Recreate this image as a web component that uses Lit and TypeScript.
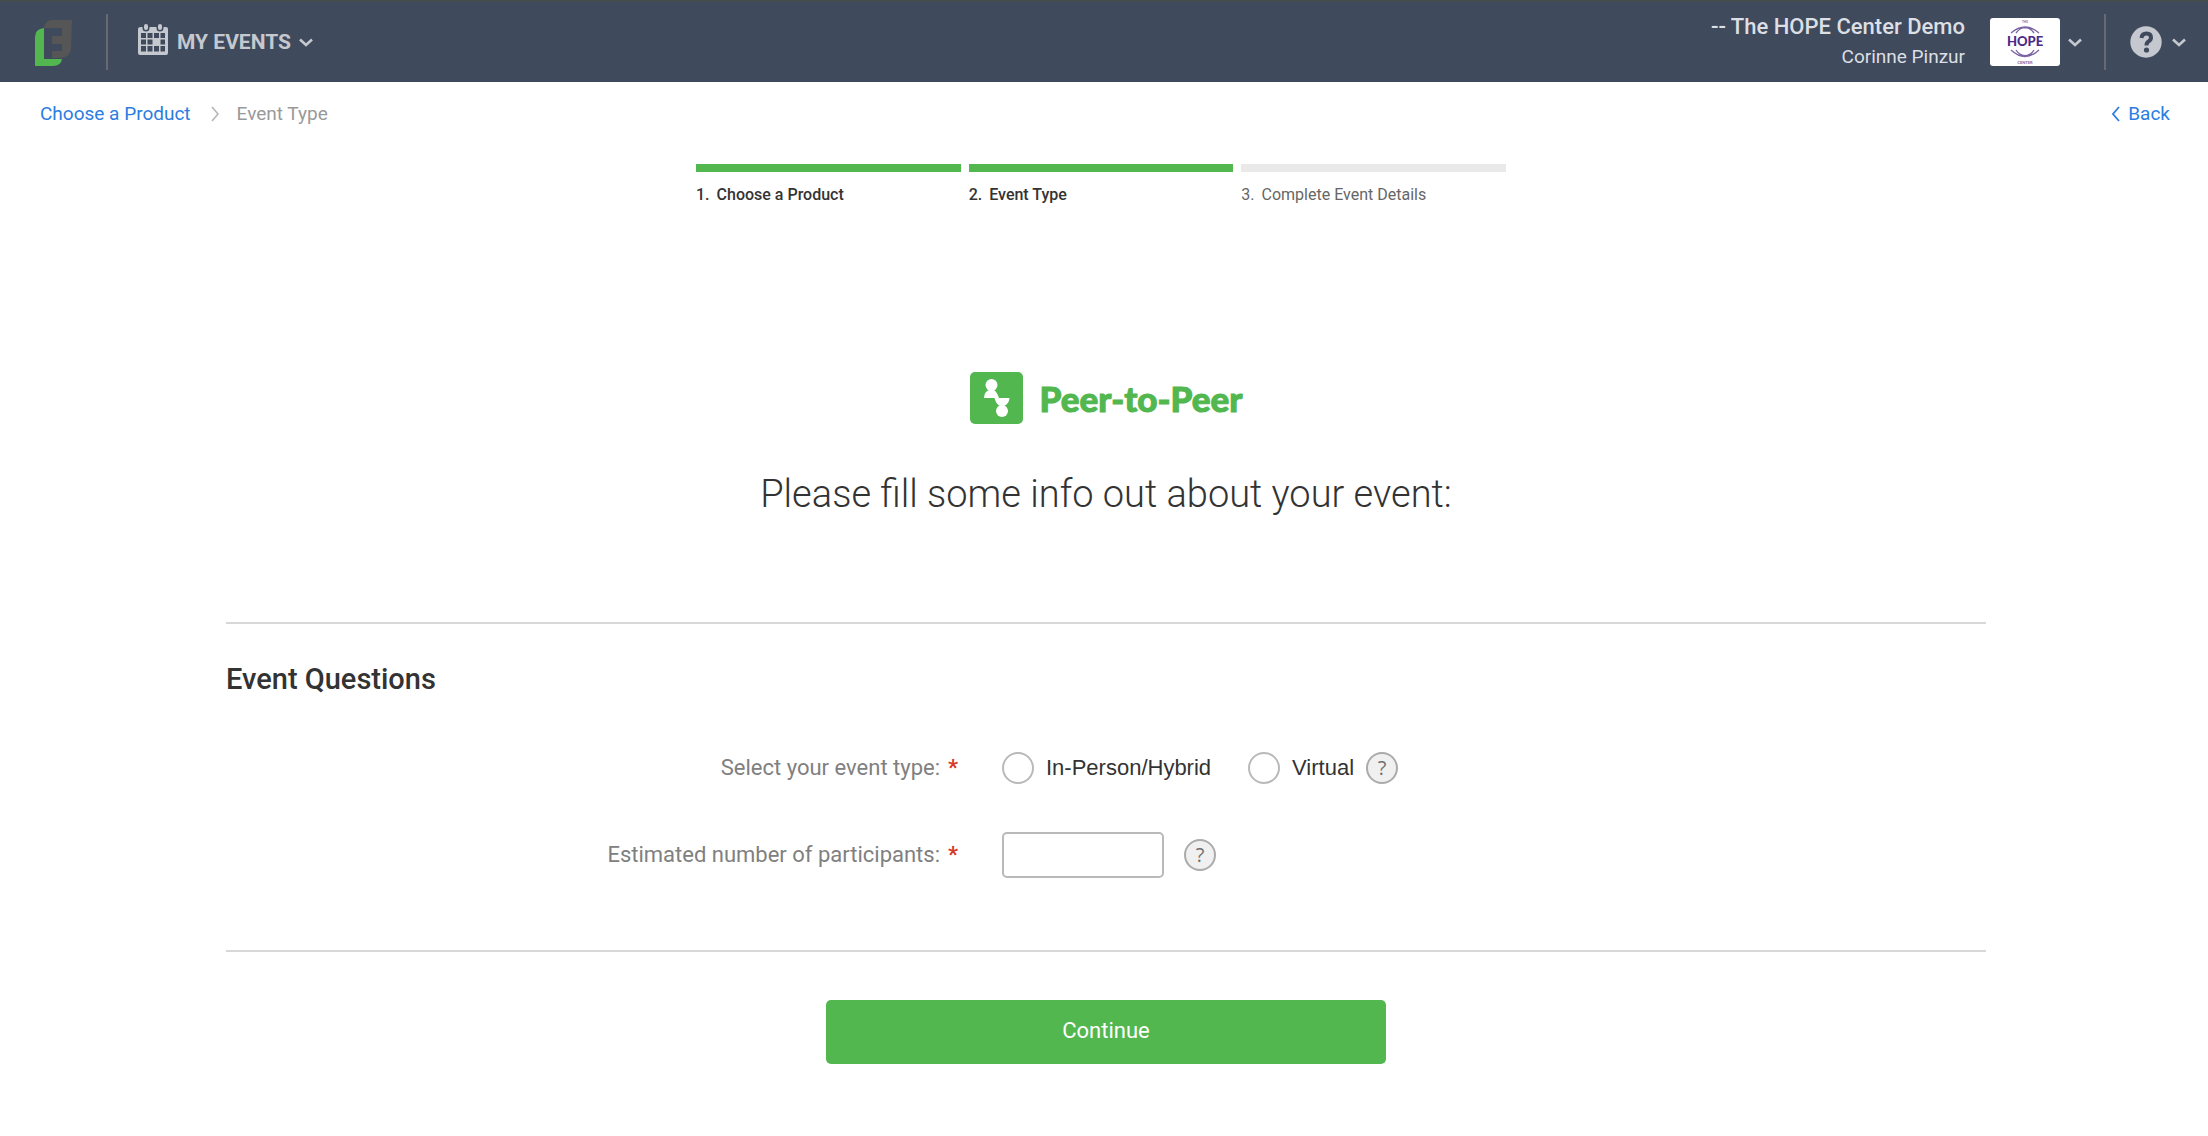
import { LitElement, html, css, svg } from "lit";
import { customElement, state } from "lit/decorators.js";

const chevronDown = svg`<path d="M1 1.5 7 7l6-5.500" fill="none" stroke="currentColor" stroke-width="2.600" />`;

@customElement("app-root")
export class AppRoot extends LitElement {
  static styles = css`
    :host {
      display: block;
      font-family: Roboto, "Liberation Sans", sans-serif;
      font-size: 22px;
      line-height: 30px;
      color: #333;
    }
    * { box-sizing: border-box; }
    svg { display: block; flex: none; }
    a { text-decoration: none; color: inherit; }
    button { font: inherit; border: 0; padding: 0; background: none; color: inherit; cursor: pointer; }
    h1, h2, ol { margin: 0; padding: 0; font-weight: inherit; list-style: none; }

    .bar {
      display: flex;
      align-items: center;
      height: 82px;
      padding: 0 22px 0 34px;
      background: #3f4a5c;
      border-top: 2px solid #454c4d;
      color: #c5c8ce;
    }
    .rule { width: 2px; height: 56px; background: #666a70; }
    .bar .rule.first { margin: 0 30px 0 34px; }
    .bar .rule.last { margin: 0 24px 0 22px; }
    .menu { display: flex; align-items: center; gap: 8px; }
    .menu.events { font-size: 21px; font-weight: 700; }
    .menu.events svg:first-child { margin-bottom: 4px; }
    .menu.help { gap: 10px; }
    .who { margin-left: auto; margin-right: 25px; text-align: right; color: #dcdfe4; }
    .org { font-size: 22px; font-weight: 500; }
    .person { font-size: 19px; }

    .trail {
      display: flex;
      align-items: center;
      padding: 16px 38px 0 40px;
      font-size: 19px;
      line-height: 32px;
      color: #999;
    }
    .trail a { color: #2b7de1; }
    .trail svg { margin: 0 18px 0 20px; }
    .trail .back { display: flex; align-items: center; gap: 8px; margin-left: auto; }
    .trail .back svg { margin: 0; }

    .steps {
      display: grid;
      grid-template-columns: repeat(3, 1fr);
      gap: 8px;
      width: 816px;
      max-width: 100%;
      margin: 34px auto 0;
      padding-right: 6px;
      font-size: 16px;
      line-height: 20px;
      color: #666;
    }
    .step { border-top: 8px solid #e9e9e9; padding-top: 13px; display: flex; gap: 7px; }
    .step.done { border-color: #52b74f; color: #333; font-weight: 500; }

    .intro { display: flex; flex-direction: column; align-items: center; padding: 167px 24px 0 28px; }
    .product {
      display: flex;
      align-items: center;
      gap: 16px;
      color: #52b74f;
      font: 900 35px/52px Lato, sans-serif;
      -webkit-text-stroke: 1px currentColor;
    }
    .intro h1 { margin-top: 44px; font-size: 38px; line-height: 52px; font-weight: 300; text-align: center; }

    .page { max-width: 1812px; margin: 102px auto 0; padding: 0 24px 0 28px; }
    .questions { border: 2px solid #d8d8d8; border-width: 2px 0; padding: 36px 0 72px; }
    .questions h2 { font-size: 29px; line-height: 38px; font-weight: 500; }
    .row {
      display: grid;
      grid-template-columns: 732px 1fr;
      column-gap: 44px;
      align-items: center;
      min-height: 46px;
    }
    .row.kind { margin-top: 47px; }
    .row.count { margin-top: 41px; }
    .label { display: block; text-align: right; color: #808080; }
    .star { margin-left: 8px; color: #d63a2c; font-weight: 700; }
    .answers { display: flex; align-items: center; }
    .choice { display: flex; align-items: center; gap: 12px; font-family: "Liberation Sans", sans-serif; }
    .choice + .choice { margin-left: 37px; }
    .choice input {
      appearance: none;
      width: 32px;
      height: 32px;
      margin: 0;
      border: 2px solid #b9b9b9;
      border-radius: 50%;
      background: #fff;
    }
    .choice input:checked { border-width: 10px; border-color: #52b74f; }
    .number {
      width: 162px;
      height: 46px;
      padding: 0 12px;
      border: 2px solid #b9b9b9;
      border-radius: 5px;
      font: inherit;
      color: inherit;
      background: #fff;
    }
    .tip {
      width: 32px;
      height: 32px;
      border: 2px solid #ababab;
      border-radius: 50%;
      background: #f0f0f0;
      color: #707070;
      font-family: "Open Sans", sans-serif;
      font-size: 20px;
      line-height: 26px;
    }
    .choice + .tip { margin-left: 12px; }
    .number + .tip { margin-left: 20px; }
    .go {
      display: block;
      width: 560px;
      max-width: 100%;
      height: 64px;
      margin: 48px auto 0;
      padding-bottom: 2px;
      border-radius: 5px;
      background: #52b74f;
      color: #fff;
    }
  `;

  @state() private kind = "";

  private steps = [
    { name: "Choose a Product", done: true },
    { name: "Event Type", done: true },
    { name: "Complete Event Details", done: false },
  ];

  private chevron() {
    return html`<svg width="14" height="9" viewBox="0 0 14 9" aria-hidden="true">${chevronDown}</svg>`;
  }

  private choice(value: string, text: string) {
    return html`<label class="choice">
      <input type="radio" name="kind" .checked=${this.kind === value} @change=${() => (this.kind = value)} />${text}
    </label>`;
  }

  render() {
    return html`
      <header class="bar">
        <a href="#" aria-label="Home">
          <svg width="38" height="47" viewBox="0 0 38 47">
            <path d="M10 9Q11 1 19 1H38L37 30Q35 39 27 39H18V32H28V25H18V17H28V9Z" fill="#565656" />
            <path d="M10 9V40H28Q27 47 19 47H1V18Q1 10 10 9Z" fill="#52b74f" />
          </svg>
        </a>
        <span class="rule first"></span>
        <button class="menu events">
          <svg width="31" height="32" viewBox="0 0 31 32">
            <path fill="currentColor" fill-rule="evenodd" d="M3 3H28Q30 3 30 5V29Q30 31 28 31H2Q0 31 0 29V5Q0 3 3 3ZM3 9V14H8V9ZM9.500 9V14H14.500V9ZM16 9V14H21V9ZM22.500 9V14H27V9ZM3 15.500V20.500H8V15.500ZM9.500 15.500V20.500H14.500V15.500ZM22.500 15.500V20.500H27V15.500ZM3 22V27.500H8V22ZM9.500 22V27.500H14.500V22ZM16 22V27.500H21V22ZM22.500 22V27.500H27V22Z" />
            <path d="M8 2V4M22 2V4" stroke="#3f4a5c" stroke-width="7" stroke-linecap="round" />
            <path d="M8 2V4M22 2V4" stroke="currentColor" stroke-width="4" stroke-linecap="round" />
          </svg>
          <span>MY EVENTS</span>
          ${this.chevron()}
        </button>
        <div class="who">
          <div class="org">-- The HOPE Center Demo</div>
          <div class="person">Corinne Pinzur</div>
        </div>
        <button class="menu" aria-label="Account">
          <svg width="70" height="48" viewBox="0 0 70 48">
            <rect width="70" height="48" rx="3" fill="#fff" />
            <g fill="none" stroke="#7a63a3" stroke-width="1.300">
              <path d="M21 15Q35 3 49 15M26 15Q32 7 40 11M44 15Q38 7 30 11" />
              <path d="M21 32Q35 45 49 32M26 32Q32 41 40 36M44 32Q38 41 30 36" />
            </g>
            <g text-anchor="middle" fill="#4b2b86" font-family="Lato, sans-serif" font-weight="900">
              <text x="35" y="28" font-size="13">HOPE</text>
              <g opacity="0.7">
                <text x="35" y="5" font-size="3">THE</text>
                <text x="35" y="46" font-size="4">CENTER</text>
              </g>
            </g>
          </svg>
          ${this.chevron()}
        </button>
        <span class="rule last"></span>
        <button class="menu help" aria-label="Help">
          <svg width="32" height="32" viewBox="0 0 32 32">
            <circle cx="16" cy="16" r="15.700" fill="currentColor" />
            <path d="M11.500 12Q12 7.500 16.500 7.500Q21 7.500 21 11.500Q21 14 18.500 15.500Q16.500 16.500 16.500 19.500" fill="none" stroke="#3f4a5c" stroke-width="4" />
            <circle cx="16.500" cy="24" r="2.600" fill="#3f4a5c" />
          </svg>
          ${this.chevron()}
        </button>
      </header>

      <nav class="trail" aria-label="Breadcrumb">
        <a href="#product">Choose a Product</a>
        <svg width="8" height="16" viewBox="0 0 8 16"><path d="M1 1 7 8 1 15" fill="none" stroke="#b5b5b5" stroke-width="1.600" /></svg>
        <span>Event Type</span>
        <a class="back" href="#back">
          <svg width="8" height="16" viewBox="0 0 8 16"><path d="M7 1 1 8 7 15" fill="none" stroke="currentColor" stroke-width="1.800" /></svg>Back</a>
      </nav>

      <ol class="steps">
        ${this.steps.map(
          (s, i) => html`<li class="step ${s.done ? "done" : ""}"><span>${i + 1}.</span><span>${s.name}</span></li>`
        )}
      </ol>

      <section class="intro">
        <div class="product">
          <svg width="54" height="52" viewBox="0 0 54 52">
            <rect width="53" height="52" rx="5" fill="currentColor" />
            <g fill="#fff" stroke="none">
              <circle cx="21.500" cy="13" r="6" />
              <path d="M14 26Q14 20 19 18H24Q27 20 29 26H39.500Q39 32 34 34H30Q26 32 24.500 26Z" />
              <circle cx="32" cy="39" r="6" />
            </g>
          </svg>
          <span>Peer-to-Peer</span>
        </div>
        <h1>Please fill some info out about your event:</h1>
      </section>

      <main class="page">
        <section class="questions">
          <h2>Event Questions</h2>
          <div class="row kind" role="radiogroup" aria-labelledby="kind-label">
            <span class="label" id="kind-label">Select your event type:<span class="star">*</span></span>
            <div class="answers">
              ${this.choice("in-person", "In-Person/Hybrid")} ${this.choice("virtual", "Virtual")}
              <button class="tip" aria-label="About event types">?</button>
            </div>
          </div>
          <div class="row count">
            <label class="label" for="count">Estimated number of participants:<span class="star">*</span></label>
            <div class="answers">
              <input class="number" id="count" type="text" inputmode="numeric" />
              <button class="tip" aria-label="About participants">?</button>
            </div>
          </div>
        </section>
        <button class="go">Continue</button>
      </main>
    `;
  }
}
